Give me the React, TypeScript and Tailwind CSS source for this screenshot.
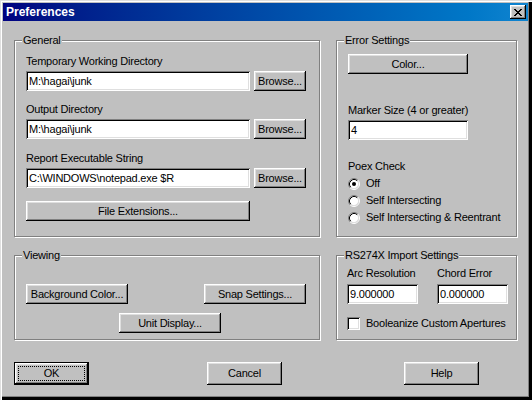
import type { ReactNode } from "react";

const raised =
  "shadow-[inset_-1px_-1px_#000,inset_1px_1px_#fff,inset_-2px_-2px_#808080,inset_2px_2px_#dfdfdf]";
const sunken =
  "shadow-[inset_1px_1px_#808080,inset_-1px_-1px_#fff,inset_2px_2px_#000,inset_-2px_-2px_#dfdfdf]";

function Btn({ children, className = "" }: { children: ReactNode; className?: string }) {
  return (
    <div className={`flex h-[20px] items-center justify-center bg-[#c0c0c0] ${raised} ${className}`}>
      {children}
    </div>
  );
}

function Field({ value, className = "" }: { value: string; className?: string }) {
  return (
    <div className={`flex h-[20px] items-center bg-white pl-[3px] ${sunken} ${className}`}>
      {value}
    </div>
  );
}

function Group({ title, className = "", children }: { title: string; className?: string; children: ReactNode }) {
  return (
    <div
      className={`relative border border-[#808080] shadow-[1px_1px_0_#fff,inset_1px_1px_0_#fff] ${className}`}
    >
      <span className="absolute left-[7px] top-[-7px] bg-[#c0c0c0] px-[1px] leading-[13px]">{title}</span>
      {children}
    </div>
  );
}

function Radio({ label, checked = false }: { label: string; checked?: boolean }) {
  return (
    <div className="flex h-[17px] items-center">
      <svg width="12" height="12" viewBox="0 0 12 12" className="shrink-0">
        <circle cx="6" cy="6" r="4.5" fill="#fff" />
        <path d="M2.11 9.89 A5.5 5.5 0 0 1 9.89 2.11" fill="none" stroke="#808080" />
        <path d="M9.89 2.11 A5.5 5.5 0 0 1 2.11 9.89" fill="none" stroke="#fff" />
        <path d="M2.82 9.18 A4.5 4.5 0 0 1 9.18 2.82" fill="none" stroke="#000" />
        <path d="M9.18 2.82 A4.5 4.5 0 0 1 2.82 9.18" fill="none" stroke="#dfdfdf" />
        {checked && <circle cx="6" cy="6" r="2" fill="#000" />}
      </svg>
      <span className="ml-[6px]">{label}</span>
    </div>
  );
}

function CloseGlyph() {
  const px = [
    "XX....XX",
    ".XX..XX.",
    "..XXXX..",
    "...XX...",
    "..XXXX..",
    ".XX..XX.",
    "XX....XX",
  ];
  return (
    <svg width="8" height="7" viewBox="0 0 8 7" shapeRendering="crispEdges">
      {px.flatMap((row, y) =>
        row.split("").map((c, x) => (c === "X" ? <rect key={`${x}-${y}`} x={x} y={y} width="1" height="1" fill="#000" /> : null))
      )}
    </svg>
  );
}

export default function App() {
  return (
    <div className="flex h-[400px] w-[532px] flex-col bg-[#c0c0c0] pb-[4px] pl-[3px] pr-[4px] pt-[3px] font-['Liberation_Sans',Arial,sans-serif] text-[11px] leading-[13px] tracking-[-0.22px] text-black shadow-[inset_1px_1px_#dfdfdf,inset_2px_2px_#fff,inset_-3px_-3px_#000,inset_-4px_-4px_#808080]">
      {/* title bar */}
      <div className="flex h-[18px] items-center justify-between bg-gradient-to-r from-[#000080] to-[#1084d0] pl-[3px] pr-[2px]">
        <span className="text-[12px] font-bold tracking-normal text-white">Preferences</span>
        <div className={`flex h-[14px] w-[16px] items-center justify-center bg-[#c0c0c0] ${raised}`}>
          <CloseGlyph />
        </div>
      </div>

      <div className="flex flex-col pl-[11px] pt-[19px]">
        <div className="flex">
          <Group title="General" className="h-[197px] w-[306px] pl-[11px] pt-[14px]">
            <div>Temporary Working Directory</div>
            <div className="mt-[3px] flex gap-[4px]">
              <Field value="M:\hagai\junk" className="w-[224px]" />
              <Btn className="w-[52px]">Browse...</Btn>
            </div>
            <div className="mt-[12px]">Output Directory</div>
            <div className="mt-[3px] flex gap-[4px]">
              <Field value="M:\hagai\junk" className="w-[224px]" />
              <Btn className="w-[52px]">Browse...</Btn>
            </div>
            <div className="mt-[13px]">Report Executable String</div>
            <div className="mt-[3px] flex gap-[4px]">
              <Field value="C:\WINDOWS\notepad.exe $R" className="w-[224px]" />
              <Btn className="w-[52px]">Browse...</Btn>
            </div>
            <Btn className="mt-[13px] w-[224px]">File Extensions...</Btn>
          </Group>

          <Group title="Error Settings" className="ml-[16px] h-[197px] w-[181px] pl-[11px] pt-[13px]">
            <Btn className="w-[120px]">Color...</Btn>
            <div className="mt-[30px]">Marker Size (4 or greater)</div>
            <Field value="4" className="mt-[3px] w-[120px]" />
            <div className="mt-[20px]">Poex Check</div>
            <div className="mt-[2px] flex flex-col">
              <Radio label="Off" checked />
              <Radio label="Self Intersecting" />
              <Radio label="Self Intersecting & Reentrant" />
            </div>
          </Group>
        </div>

        <div className="mt-[18px] flex">
          <Group title="Viewing" className="h-[85px] w-[306px] pl-[11px] pr-[13px] pt-[28px]">
            <div className="flex justify-between">
              <Btn className="w-[102px]">Background Color...</Btn>
              <Btn className="w-[102px]">Snap Settings...</Btn>
            </div>
            <Btn className="ml-[93px] mt-[9px] w-[102px]">Unit Display...</Btn>
          </Group>

          <Group title="RS274X Import Settings" className="ml-[16px] h-[85px] w-[181px] pl-[10px] pt-[11px]">
            <div className="flex gap-[19px]">
              <div className="flex w-[71px] flex-col">
                <span>Arc Resolution</span>
                <Field value="9.000000" className="mt-[4px]" />
              </div>
              <div className="flex w-[71px] flex-col">
                <span>Chord Error</span>
                <Field value="0.000000" className="mt-[4px]" />
              </div>
            </div>
            <div className="mt-[13px] flex items-center">
              <div className={`h-[13px] w-[13px] shrink-0 bg-white ${sunken}`} />
              <span className="ml-[6px]">Booleanize Custom Apertures</span>
            </div>
          </Group>
        </div>

        <div className="mt-[22px] flex">
          <div className="relative flex h-[23px] w-[75px] items-center justify-center border border-black">
            <div className={`absolute inset-0 ${raised}`} />
            <div className="absolute inset-[3px] border border-dotted border-black" />
            <span className="relative">OK</span>
          </div>
          <Btn className="ml-[118px] h-[23px] w-[75px]">Cancel</Btn>
          <Btn className="ml-[122px] h-[23px] w-[75px]">Help</Btn>
        </div>
      </div>
    </div>
  );
}
